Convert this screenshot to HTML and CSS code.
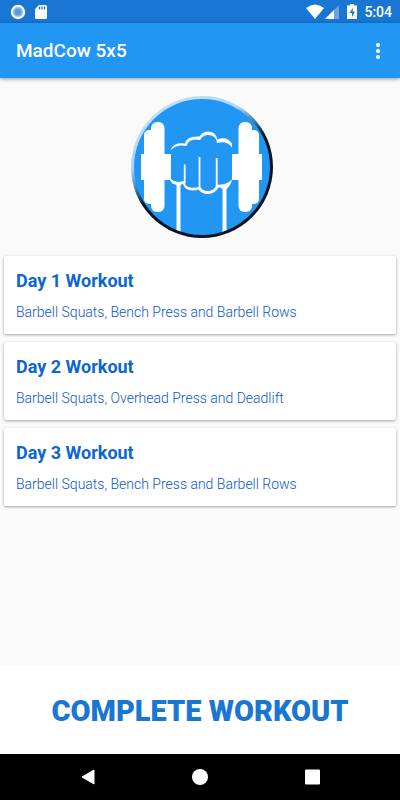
FILE: index.html
```html
<!DOCTYPE html>
<html lang="en">
<head>
<meta charset="utf-8">
<meta name="viewport" content="width=device-width, initial-scale=1">
<title>MadCow 5x5</title>
<link rel="stylesheet" href="styles.css">
</head>
<body>
<div class="status">
  <div class="status-group status-left">
    <svg width="16" height="16" viewBox="0 0 16 16" aria-hidden="true"><circle cx="8" cy="8" r="7.2" fill="#fff"/><circle cx="8" cy="8" r="5" fill="#8bbbea"/><circle cx="8" cy="8" r="3.2" fill="#5b9be0"/></svg>
    <svg width="12" height="16" viewBox="0 0 12 16" aria-hidden="true"><path d="M4 1h6.500Q12 1 12 2.500v11q0 1.500-1.500 1.500h-9Q0 15 0 13.500V5z" fill="#fff"/><path d="M4.500 2.500v3M7 2.500v3M9.500 2.500v3" stroke="#1976d2" stroke-width="1.300"/></svg>
  </div>
  <div class="status-group">
    <svg width="18" height="16" viewBox="0 0 18 16" aria-hidden="true"><path d="M0 4Q9-3 18 4L9 15z" fill="#fff"/></svg>
    <svg width="14" height="16" viewBox="0 0 14 16" aria-hidden="true"><path d="M14 1v14H0z" fill="#69a5e2"/><path d="M9 6v9H0z" fill="#fff"/></svg>
    <svg class="battery" width="10" height="16" viewBox="0 0 10 16" aria-hidden="true"><path d="M3 0h4v1.500h3V15H0V1.500h3z" fill="#fff"/><path d="M6 3.500L2.500 9H5v4L8 7.500H5.500z" fill="#1976d2"/></svg>
    <span class="clock">5:04</span>
  </div>
</div>
<header class="toolbar">
  <h1>MadCow 5x5</h1>
  <button class="more" aria-label="More options"><svg width="6" height="18" viewBox="0 0 6 18"><g fill="#fff"><circle cx="3" cy="3" r="2.100"/><circle cx="3" cy="9" r="2.100"/><circle cx="3" cy="15" r="2.100"/></g></svg></button>
</header>
<main>
  <svg class="logo" width="142" height="142" viewBox="131 96 142 142" role="img" aria-label="Fist lifting a dumbbell">
    <defs>
      <linearGradient id="rim" x1=".25" y1=".07" x2=".75" y2=".93"><stop offset="0" stop-color="#c4e1fa"/><stop offset=".26" stop-color="#a9d4f8"/><stop offset=".4" stop-color="#3f7fb5"/><stop offset=".52" stop-color="#071522"/><stop offset="1" stop-color="#071522"/></linearGradient>
      <clipPath id="disc"><circle cx="202" cy="167" r="68"/></clipPath>
    </defs>
    <circle cx="202" cy="167" r="71" fill="url(#rim)"/>
    <circle cx="202" cy="167" r="68" fill="#2196f3"/>
    <g fill="#fff" clip-path="url(#disc)">
      <rect x="151" y="122" width="13.500" height="90" rx="6"/><rect x="144" y="130" width="12" height="74" rx="5"/><rect x="141" y="154" width="30" height="26"/>
      <rect x="238.500" y="122" width="13.500" height="90" rx="6"/><rect x="247" y="130" width="12" height="74" rx="5"/><rect x="232" y="154" width="30" height="26"/>
      <path d="M174 182h9l-2.500 3v57h-4v-57zM218 186q9 0 14-6-1 5-5.500 9v53h-4v-53z"/>
    </g>
    <g fill="#fff">
      <path d="M171 149q3-7 14-5.500 2-8 14.500-7 3-5 9-5 7 0 9 8 9-4 14.500 4v4q-5-7-15-4.500-1-8-9-8-5 0-8 5-11-2-13.500 6-10-2-15.500 4z"/>
      <path d="M171 179q5 5 14 1.500v2q0 5 7 5.300 5 .2 7.500-1.300 4 5 9 4.500 6-.5 8-6.500 11 1 15.500-5.500-3 8-13.500 8.500-4 6.500-10 6.500-6 .5-10-4.500-4 1.500-9 .5-5-1-6.500-6-10 3-13-4z"/>
    </g>
    <path d="M184.700 164.500V183M199.500 157v31.500M216.700 158v28.500" fill="none" stroke="#fff" stroke-width="1.800"/>
  </svg>
  <section class="cards">
    <article class="card"><h2>Day 1 Workout</h2><p>Barbell Squats, Bench Press and Barbell Rows</p></article>
    <article class="card"><h2>Day 2 Workout</h2><p>Barbell Squats, Overhead Press and Deadlift</p></article>
    <article class="card"><h2>Day 3 Workout</h2><p>Barbell Squats, Bench Press and Barbell Rows</p></article>
  </section>
</main>
<button class="complete">COMPLETE WORKOUT</button>
<nav class="nav">
  <button aria-label="Back"><svg width="16" height="16" viewBox="0 0 16 16"><path d="M14 1v14L2 8z" fill="#fff" stroke="#fff" stroke-linejoin="round"/></svg></button>
  <button aria-label="Home"><svg width="16" height="16" viewBox="0 0 16 16"><circle cx="8" cy="8" r="8" fill="#fff"/></svg></button>
  <button aria-label="Recent apps"><svg width="16" height="16" viewBox="0 0 16 16"><rect x="1" y=".5" width="15" height="15" rx="1" fill="#fff"/></svg></button>
</nav>
</body>
</html>
```
FILE: styles.css
```css
* { box-sizing: border-box; }
body {
  margin: 0;
  min-height: 100vh;
  display: flex;
  flex-direction: column;
  background: #fafafa;
  font-family: Roboto, "Liberation Sans", sans-serif;
}
h1, h2, p { margin: 0; }
button { border: 0; padding: 0; background: none; font-family: inherit; cursor: pointer; }
svg { display: block; }
.status {
  height: 23px;
  padding: 0 8px 0 10px;
  display: flex;
  justify-content: space-between;
  align-items: center;
  background: #1976d2;
}
.status-group { display: flex; align-items: center; gap: 1px; }
.status-left { gap: 9px; }
.battery { margin: 0 6px 0 7px; }
.clock { color: #fff; font-size: 14px; line-height: 24px; font-weight: 500; }
.toolbar {
  height: 55px;
  padding: 0 16px;
  display: flex;
  justify-content: space-between;
  align-items: center;
  background: #2196f3;
  box-shadow: 0 1px 4px rgba(0, 0, 0, .4);
}
.toolbar h1 { color: #fff; font-size: 19px; line-height: 24px; font-weight: 500; }
.more { padding: 4px 3px; }
main { flex: 1; padding: 18px 4px 8px; }
.logo { margin: 0 auto 18px; position: relative; left: 2px; }
.cards { display: flex; flex-direction: column; gap: 8px; }
.card {
  padding: 13px 12px 12px;
  border-radius: 2px;
  background: #fff;
  box-shadow: 0 1px 3px rgba(0, 0, 0, .35);
}
.card h2 { color: #0b66d0; font-size: 18px; line-height: 24px; font-weight: 700; }
.card p { margin-top: 9px; color: #0b57d0; font-size: 14px; line-height: 20px; font-weight: 300; }
.complete {
  padding: 25px 8px 23px;
  background: #fff;
  color: #1976d2;
  font-size: 29px;
  line-height: 40px;
  font-weight: 900;
}
.nav {
  height: 46px;
  padding: 0 32px;
  display: flex;
  justify-content: space-around;
  align-items: center;
  background: #000;
}
.nav button { padding: 8px; }
```
